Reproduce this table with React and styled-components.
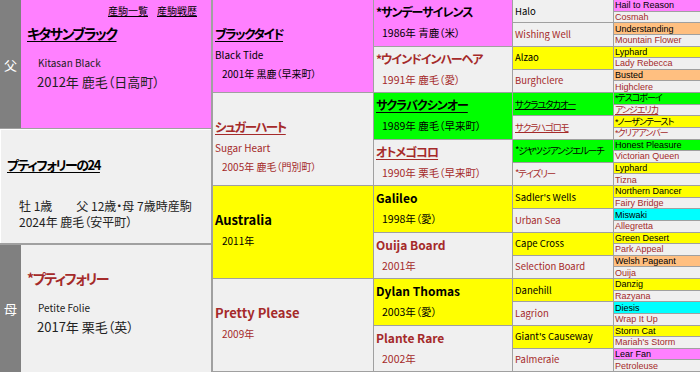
import React from "react";
import styled, { createGlobalStyle } from "styled-components";

const RED = "#a52a2a";
const LINE = "#a0a0a0";
const BG = {
  m: "#ff80ff",
  y: "#ffff00",
  g: "#00ff00",
  o: "#ffbf80",
  c: "#00ffff",
  n: "#f0f0f0",
};

const GlobalStyle = createGlobalStyle`
  html, body { margin: 0; padding: 0; background: #ffffff; }
  body { font-family: "Noto Sans CJK JP", "Noto Sans", sans-serif; }
`;

// 2代目
const sires = [
  { name: "ブラックタイド", en: "Black Tide", year: "2001年 黒鹿（早来町）", bg: "m", u: true, jp: true },
  { name: "シュガーハート", en: "Sugar Heart", year: "2005年 鹿毛（門別町）", bg: "n", red: true, u: true, jp: true },
  { name: "Australia", year: "2011年", bg: "y" },
  { name: "Pretty Please", year: "2009年", bg: "n", red: true },
];

// 3代目
const third = [
  { name: "*サンデーサイレンス", year: "1986年 青鹿（米）", bg: "m", jp: true },
  { name: "*ウインドインハーヘア", year: "1991年 鹿毛（愛）", bg: "n", red: true, jp: true },
  { name: "サクラバクシンオー", year: "1989年 鹿毛（早来町）", bg: "g", u: true, jp: true },
  { name: "オトメゴコロ", year: "1990年 栗毛（早来町）", bg: "n", red: true, u: true, jp: true },
  { name: "Galileo", year: "1998年（愛）", bg: "y" },
  { name: "Ouija Board", year: "2001年", bg: "n", red: true },
  { name: "Dylan Thomas", year: "2003年（愛）", bg: "y" },
  { name: "Plante Rare", year: "2002年", bg: "n", red: true },
];

// 4代目
const fourth = [
  { name: "Halo", bg: "n" },
  { name: "Wishing Well", bg: "n", red: true },
  { name: "Alzao", bg: "y" },
  { name: "Burghclere", bg: "n", red: true },
  { name: "サクラユタカオー", bg: "g", u: true, jp: true },
  { name: "サクラハゴロモ", bg: "n", red: true, u: true, jp: true },
  { name: "*ジヤツジアンジエルーチ", bg: "g", jp: true },
  { name: "*テイズリー", bg: "n", red: true, jp: true },
  { name: "Sadler's Wells", bg: "y" },
  { name: "Urban Sea", bg: "n", red: true },
  { name: "Cape Cross", bg: "y" },
  { name: "Selection Board", bg: "n", red: true },
  { name: "Danehill", bg: "y" },
  { name: "Lagrion", bg: "n", red: true },
  { name: "Giant's Causeway", bg: "y" },
  { name: "Palmeraie", bg: "n", red: true },
];

// 5代目 [name, bg, red, underline, jp]
const fifth = [
  ["Hail to Reason", "m"], ["Cosmah", "n", 1],
  ["Understanding", "o"], ["Mountain Flower", "n", 1],
  ["Lyphard", "y"], ["Lady Rebecca", "n", 1],
  ["Busted", "o"], ["Highclere", "n", 1],
  ["*テスコボーイ", "g", 0, 0, 1], ["アンジエリカ", "n", 1, 1, 1],
  ["*ノーザンテースト", "y", 0, 0, 1], ["*クリアアンバー", "n", 1, 0, 1],
  ["Honest Pleasure", "g"], ["Victorian Queen", "n", 1],
  ["Lyphard", "y"], ["Tizna", "n", 1],
  ["Northern Dancer", "y"], ["Fairy Bridge", "n", 1],
  ["Miswaki", "c"], ["Allegretta", "n", 1],
  ["Green Desert", "y"], ["Park Appeal", "n", 1],
  ["Welsh Pageant", "o"], ["Ouija", "n", 1],
  ["Danzig", "y"], ["Razyana", "n", 1],
  ["Diesis", "c"], ["Wrap It Up", "n", 1],
  ["Storm Cat", "y"], ["Mariah's Storm", "n", 1],
  ["Lear Fan", "m"], ["Petroleuse", "n", 1],
];

function App() {
  return (
    <>
      <GlobalStyle />
      <Page>
        <LeftColumn>
          <ParentRow $h={128}>
            <SideLabel>父</SideLabel>
            <ParentBody $bg={BG.m}>
              <LinkRow>
                <Link>産駒一覧</Link>
                <Link>産駒戦歴</Link>
              </LinkRow>
              <BigName $u>キタサンブラック</BigName>
              <EnName>Kitasan Black</EnName>
              <BirthLine>2012年 鹿毛（日高町）</BirthLine>
            </ParentBody>
          </ParentRow>

          <FoalBox>
            <FoalName>プティフォリーの24</FoalName>
            <FoalLine>
              <span>牡 1歳</span>
              <span>父 12歳・母 7歳時産駒</span>
            </FoalLine>
            <FoalLine>2024年 鹿毛（安平町）</FoalLine>
          </FoalBox>

          <ParentRow $fill>
            <SideLabel>母</SideLabel>
            <ParentBody $bg={BG.n}>
              <LinkRow />
              <BigName $red>*プティフォリー</BigName>
              <EnName>Petite Folie</EnName>
              <BirthLine>2017年 栗毛（英）</BirthLine>
            </ParentBody>
          </ParentRow>
        </LeftColumn>

        <Column $w={160}>
          {sires.map((h, i) => (
            <GenCell key={i} $bg={BG[h.bg]} $red={h.red}>
              <GenName $u={h.u} $jp={h.jp}>{h.name}</GenName>
              {h.en && <GenEn>{h.en}</GenEn>}
              <GenYear $first={!h.en}>{h.year}</GenYear>
            </GenCell>
          ))}
        </Column>

        <Column $w={138}>
          {third.map((h, i) => (
            <ThirdCell key={i} $bg={BG[h.bg]} $red={h.red}>
              <ThirdName $u={h.u} $jp={h.jp}>{h.name}</ThirdName>
              <ThirdYear>{h.year}</ThirdYear>
            </ThirdCell>
          ))}
        </Column>

        <Column $w={100}>
          {fourth.map((h, i) => (
            <SmallCell key={i} $bg={BG[h.bg]} $red={h.red} $u={h.u} $jp={h.jp}>
              {h.name}
            </SmallCell>
          ))}
        </Column>

        <Column $w={86} $last>
          {fifth.map(([name, bg, red, u, jp], i) => (
            <TinyCell key={i} $bg={BG[bg]} $red={red} $u={u} $jp={jp}>
              {name}
            </TinyCell>
          ))}
        </Column>
      </Page>
    </>
  );
}

const Page = styled.div`
  display: flex;
  width: 700px;
  height: 372px;
  overflow: hidden;
  background: #f0f0f0;
  color: #000;
  font-family: "Noto Sans CJK JP", "Noto Sans", sans-serif;
  font-feature-settings: "palt";
`;

const LeftColumn = styled.div`
  width: 211px;
  flex: none;
  display: flex;
  flex-direction: column;
  border-right: 2px solid ${LINE};
`;

const ParentRow = styled.div`
  display: flex;
  flex: ${(p) => (p.$fill ? "1" : "none")};
  height: ${(p) => (p.$h ? `${p.$h}px` : "auto")};
`;

const SideLabel = styled.div`
  width: 21px;
  flex: none;
  background: #808080;
  color: #ffffff;
  font-size: 13px;
  display: flex;
  align-items: center;
  justify-content: center;
`;

const ParentBody = styled.div`
  flex: 1;
  background: ${(p) => p.$bg};
  padding: 4px 14px 0 6px;
`;

const LinkRow = styled.div`
  height: 20px;
  display: flex;
  justify-content: flex-end;
  gap: 9px;
  font-size: 10px;
  line-height: 14px;
`;

const Link = styled.span`
  text-decoration: underline;
`;

const BigName = styled.div`
  font-size: 14px;
  font-weight: bold;
  line-height: 18px;
  letter-spacing: -1.5px;
  color: ${(p) => (p.$red ? RED : "#000")};
  text-decoration: ${(p) => (p.$u ? "underline" : "none")};
  text-underline-offset: 2px;
`;

const EnName = styled.div`
  margin-top: 14px;
  padding-left: 11px;
  font-size: 10px;
  line-height: 14px;
  color: #222;
`;

const BirthLine = styled.div`
  margin-top: 4px;
  padding-left: 10px;
  font-size: 13px;
  line-height: 16px;
  color: #222;
`;

const FoalBox = styled.div`
  height: 117px;
  flex: none;
  box-sizing: border-box;
  padding: 27px 0 0 7px;
  background: #f0f0f0;
  border-top: 1px solid ${LINE};
  border-bottom: 2px solid ${LINE};
  box-shadow: inset 1px 1px 0 #ffffff;
`;

const FoalName = styled.div`
  margin-bottom: 24px;
  font-size: 13px;
  font-weight: bold;
  line-height: 18px;
  letter-spacing: -1.5px;
  text-decoration: underline;
  text-underline-offset: 2px;
`;

const FoalLine = styled.div`
  display: flex;
  gap: 24px;
  padding-left: 12px;
  font-size: 12px;
  line-height: 16px;
  color: #222;
`;

const Column = styled.div`
  width: ${(p) => p.$w}px;
  flex: none;
  display: flex;
  flex-direction: column;
  border-right: ${(p) => (p.$last ? "none" : `1px solid ${LINE}`)};
`;

const BaseCell = styled.div`
  flex: 1;
  min-height: 0;
  overflow: hidden;
  display: flex;
  flex-direction: column;
  background: ${(p) => p.$bg};
  color: ${(p) => (p.$red ? RED : "#000")};
  border-bottom: 1px solid ${LINE};
  white-space: nowrap;
`;

const GenCell = styled(BaseCell)`
  padding: 26px 0 0 2px;
`;

const GenName = styled.div`
  font-size: ${(p) => (p.$jp ? "12.5px" : "13px")};
  font-weight: bold;
  line-height: 16px;
  letter-spacing: ${(p) => (p.$jp ? "-1.4px" : "0")};
  text-decoration: ${(p) => (p.$u ? "underline" : "none")};
  text-underline-offset: 2px;
`;

const GenEn = styled.div`
  margin-top: 6px;
  font-size: 10px;
  line-height: 14px;
`;

const GenYear = styled.div`
  margin-top: ${(p) => (p.$first ? "6px" : "5px")};
  padding-left: 7px;
  font-size: 10px;
  line-height: 14px;
`;

const ThirdCell = styled(BaseCell)`
  padding: 4px 0 0 2px;
`;

const ThirdName = styled.div`
  font-size: 12px;
  font-weight: bold;
  line-height: 16px;
  letter-spacing: ${(p) => (p.$jp ? "-1px" : "0")};
  text-decoration: ${(p) => (p.$u ? "underline" : "none")};
  text-underline-offset: 2px;
`;

const ThirdYear = styled.div`
  margin-top: 6px;
  padding-left: 6px;
  font-size: 10.5px;
  line-height: 14px;
`;

const SmallCell = styled(BaseCell)`
  justify-content: center;
  padding-left: 2px;
  font-size: 9.5px;
  line-height: 13px;
  letter-spacing: ${(p) => (p.$jp ? "-1.2px" : "0")};
  text-decoration: ${(p) => (p.$u ? "underline" : "none")};
`;

const TinyCell = styled(BaseCell)`
  justify-content: center;
  padding-left: 1px;
  font-family: "Liberation Sans", "Noto Sans CJK JP", sans-serif;
  font-size: 9px;
  line-height: 10px;
  letter-spacing: ${(p) => (p.$jp ? "-1px" : "0")};
  text-decoration: ${(p) => (p.$u ? "underline" : "none")};
`;

export default App;
